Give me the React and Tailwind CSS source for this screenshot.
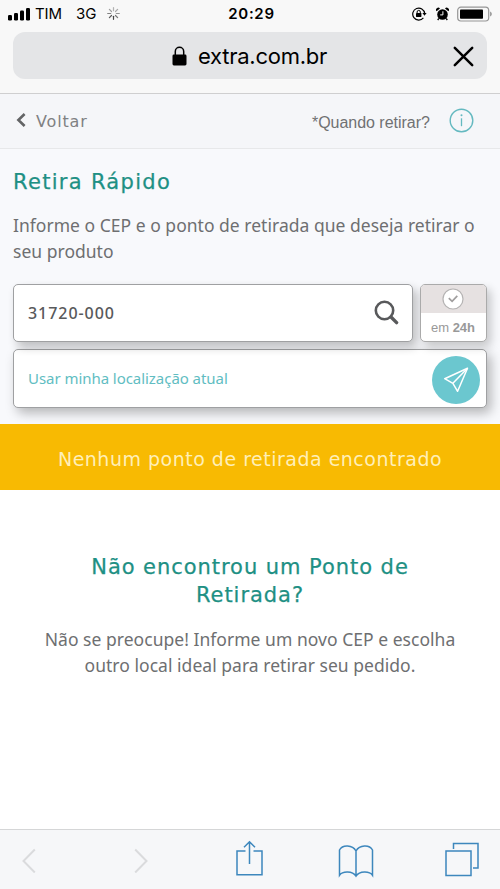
import { useState } from 'react';

function StatusBar() {
  return (
    <div className="h-7 grid grid-cols-3 items-center text-black font-['Inter',sans-serif]">
      <div className="flex items-center pl-2 text-[15px]">
        <svg width="23" height="14" viewBox="0 0 23 14" fill="currentColor">
          <rect x="0" y="8" width="4" height="5.5" rx="1.2" />
          <rect x="6" y="6" width="4" height="7.5" rx="1.2" />
          <rect x="12" y="3.5" width="4" height="10" rx="1.2" />
          <rect x="18" y="1" width="4" height="12.5" rx="1.2" />
        </svg>
        <span className="ml-1 w-[27px] tracking-[-0.1px]">TIM</span>
        <span className="ml-[14px] w-[22px]">3G</span>
        <svg className="ml-[9px] -mt-px" width="13" height="13" viewBox="0 0 13 13" stroke="#333" strokeWidth="1.2" strokeLinecap="round">
          <path d="M6.5 .7v3" opacity=".35" />
          <path d="M10.6 2.4 8.5 4.5" opacity=".4" />
          <path d="M12.3 6.5h-3" opacity=".5" />
          <path d="M10.6 10.6 8.5 8.5" opacity=".65" />
          <path d="M6.5 12.3v-3" opacity=".9" />
          <path d="M2.4 10.6 4.5 8.5" opacity=".8" />
          <path d="M.7 6.5h3" opacity=".6" />
          <path d="M2.4 2.4 4.5 4.5" opacity=".45" />
        </svg>
      </div>
      <div className="text-center text-[15px] font-semibold tracking-[0.7px] pl-[3px]">20:29</div>
      <div className="flex items-center justify-end pr-2">
        {/* rotation lock */}
        <svg width="15" height="14" viewBox="0 0 15 14" fill="none" stroke="#000" strokeWidth="1.2">
          <path d="M11.4 10.9A6 6 0 1 1 12.7 6.4" />
          <path d="M10.4 6h4.2l-2.1 2.8z" fill="#000" stroke="none" />
          <rect x="4" y="6" width="5.4" height="4" rx=".4" fill="#000" stroke="none" />
          <path d="M5.1 6.2V5a1.6 1.6 0 0 1 3.2 0v1.2" strokeWidth="1" />
        </svg>
        {/* alarm */}
        <svg className="ml-[9px]" width="13" height="14" viewBox="0 0 13 14">
          <circle cx="6.5" cy="7.5" r="5.3" />
          <path d="M.6 4.3A2.2 2.2 0 0 1 4 1.4zM12.4 4.3A2.2 2.2 0 0 0 9 1.4z" />
          <path d="M2.8 11.5 1.7 13M10.2 11.5l1.1 1.5" stroke="#000" strokeWidth="1.3" />
          <path d="M6.9 4.3v3.6H4.2" fill="none" stroke="#f8f8f8" strokeWidth="1" />
        </svg>
        <svg className="ml-[8px] -mr-px -mt-px" width="36" height="16" viewBox="0 0 36 16">
          <rect x=".7" y="1.2" width="31" height="13.8" rx="3.2" fill="none" stroke="#969696" strokeWidth="1.2" />
          <rect x="3" y="3.5" width="23" height="9.2" rx=".8" />
          <path d="M33.2 5.6c2 .8 2 4.2 0 5z" fill="#8b8b8b" />
        </svg>
      </div>
    </div>
  );
}

function AddressBar() {
  return (
    <div className="mx-[13px] mt-1 h-[47px] rounded-[12px] bg-[#e4e5e7] flex items-center text-black">
      <svg className="ml-[159px] shrink-0" width="15" height="20" viewBox="0 0 15 20">
        <rect x=".5" y="8.5" width="14" height="11" rx="1.4" />
        <path d="M3.3 9V5.4a4.2 4.2 0 0 1 8.4 0V9" fill="none" stroke="#000" strokeWidth="1.5" />
      </svg>
      <span className="ml-[11px] flex-1 font-['Inter',sans-serif] text-[22px] leading-[30px] tracking-[-0.25px]">extra.com.br</span>
      <svg className="mr-[13px] mt-px" width="21" height="21" viewBox="0 0 21 21" stroke="#000" strokeWidth="2.5" strokeLinecap="round">
        <path d="M1.8 1.8l17.4 17.4M19.2 1.8L1.8 19.2" />
      </svg>
    </div>
  );
}

function PageNav() {
  return (
    <nav className="h-[55px] bg-[#f5f6f9] border-b border-[#e7e8ea] flex items-center text-[#808183]">
      <svg className="ml-[16px] -mt-[3px]" width="10" height="14" viewBox="0 0 10 14" fill="none" stroke="#636466" strokeWidth="2.6">
        <path d="M8.6 1 2.4 7l6.2 6" />
      </svg>
      <span className="ml-[10px] mt-px font-['DejaVu_Sans',sans-serif] text-[16px] leading-6 tracking-[0.85px]">Voltar</span>
      <span className="ml-auto mt-[3px] w-[118px] whitespace-nowrap font-['Liberation_Sans',sans-serif] text-[16px] leading-5 tracking-[-0.03px] text-[#707173]">
        *Quando retirar?
      </span>
      <svg className="ml-[19px] mr-[26px] -mt-[2px]" width="25" height="25" viewBox="0 0 25 25" fill="none" stroke="#64b9c0" strokeWidth="1.4">
        <circle cx="12.5" cy="12.5" r="11.3" />
        <path d="M12.5 10.3v7.9" strokeWidth="1.3" />
        <circle cx="12.5" cy="7.2" r="1" fill="#64b9c0" stroke="none" />
      </svg>
    </nav>
  );
}

function SearchForm() {
  const [cep, setCep] = useState('31720-000');

  return (
    <section className="h-[275px] bg-[#f8f9fc] px-[13px] pt-[19px] overflow-hidden">
      <h1 className="font-['DejaVu_Sans',sans-serif] text-[21px] leading-7 tracking-[1.3px] text-[#1e9084] [-webkit-text-stroke:0.25px_#1e9084]">Retira Rápido</h1>
      <p className="mt-[16px] whitespace-nowrap font-['Noto_Sans',sans-serif] text-[17.5px] leading-[26px] tracking-[0.02px] text-[#6e6f71]">
        Informe o CEP e o ponto de retirada que deseja retirar o<br />seu produto
      </p>

      <div className="mt-[20px] flex gap-[7px]">
        <div className="w-[400px] h-[58px] bg-white rounded-[5px] border border-[#9fa0a2] shadow-[4px_5px_10px_rgba(0,0,0,0.24)] flex items-center">
          <input
            type="text"
            value={cep}
            onChange={e => setCep(e.target.value)}
            aria-label="CEP"
            className="ml-[14px] -mt-px flex-1 min-w-0 bg-transparent outline-none font-['Noto_Sans',sans-serif] font-medium text-[16px] tracking-[0.95px] text-[#58595b]"
          />
          <svg className="mr-[13px] -mt-px" width="25" height="25" viewBox="0 0 25 25" fill="none" stroke="#58595b" strokeLinecap="round">
            <circle cx="10.5" cy="10.5" r="8.7" strokeWidth="2.6" />
            <path d="M17 17l5.6 5.6" strokeWidth="3.4" />
          </svg>
        </div>
        <div className="w-[67px] h-[58px] bg-white rounded-[5px] border border-[#aaa] shadow-[4px_5px_10px_rgba(0,0,0,0.2)] overflow-hidden">
          <div className="h-[28px] bg-[#e6e1e1] flex items-center justify-center">
            <svg className="-ml-px" width="22" height="22" viewBox="0 0 22 22" fill="none">
              <circle cx="11" cy="11" r="10" fill="#fff" stroke="#b5b3b3" strokeWidth="1.2" />
              <path d="M6.8 10.2l3.3 3.2 5.2-5.5" stroke="#a09e9e" strokeWidth="1.7" />
            </svg>
          </div>
          <div className="h-[28px] pt-px pr-px flex items-center justify-center font-['Liberation_Sans',sans-serif] text-[13px] text-[#999]">
            <span className="whitespace-nowrap">em <b>24h</b></span>
          </div>
        </div>
      </div>

      <button className="mt-[7px] w-full h-[59px] bg-white rounded-[5px] border border-[#9fa0a2] shadow-[4px_5px_12px_rgba(0,0,0,0.28)] flex items-center justify-between">
        <span className="ml-[14px] -mt-px font-['Noto_Sans',sans-serif] text-[15px] tracking-[-0.05px] text-[#61bdc2]">Usar minha localização atual</span>
        <span className="mr-[6px] mt-[2px] size-12 rounded-full bg-[#6bc7cf] flex items-center justify-center">
          <svg width="26" height="26" viewBox="0 0 26 26" fill="none" stroke="#fff" strokeWidth="1.5" strokeLinejoin="round">
            <path d="M24.5 1.2 1.7 11.7l8.2 4.6 4.7 8z" />
            <path d="M24.5 1.2 9.9 16.3" />
          </svg>
        </span>
      </button>
    </section>
  );
}

function Toolbar() {
  return (
    <footer className="mt-auto h-[60px] border-t border-[#d5d6d7] bg-[#f6f7f9] flex items-center text-[#3d87bd]">
      <svg className="ml-[22px] mt-[2px]" width="14" height="25" viewBox="0 0 14 25" fill="none" stroke="#dadbdd" strokeWidth="2">
        <path d="M12.8 1.5 1.5 13l11.3 11.5" />
      </svg>
      <svg className="ml-[98px] mt-[2px]" width="14" height="25" viewBox="0 0 14 25" fill="none" stroke="#dadbdd" strokeWidth="2">
        <path d="M1.2 1.5 12.5 13 1.2 24.5" />
      </svg>
      <svg className="ml-[87px] -mt-[6px]" width="28" height="38" viewBox="0 0 28 38" fill="none" stroke="currentColor" strokeWidth="1.5">
        <path d="M10.5 13H2v23.7h25V13h-8.5M14.5 26V4M9 9.3l5.5-5.5L20 9.3" />
      </svg>
      <svg className="ml-[75px] mt-[2px]" width="36" height="34" viewBox="0 0 36 34" fill="none" stroke="currentColor" strokeWidth="1.5">
        <path d="M18 7C14.5.8 4.500.5 1.500 6v25.300C4.500 27 14.500 26.800 18 32.200 21.500 26.800 31.500 27 34.500 31.300V6C31.500.5 21.500.8 18 7zM18 7v25" />
      </svg>
      <svg className="ml-[70px] -mt-px" width="36" height="36" viewBox="0 0 36 36" fill="none" stroke="currentColor" strokeWidth="1.5">
        <rect x="2" y="10" width="25" height="24.5" />
        <path d="M9.5 8V2.500h24.500V27h-5" />
      </svg>
    </footer>
  );
}

export default function App() {
  return (
    <main className="w-[500px] h-[889px] bg-white flex flex-col overflow-hidden">
      <header className="h-[94px] shrink-0 bg-[#f8f8f8] border-b border-[#cfcfd0]">
        <StatusBar />
        <AddressBar />
      </header>
      <PageNav />
      <SearchForm />
      <div className="h-[66px] bg-[#f8ba02] flex items-center justify-center pt-[4px]">
        <p className="whitespace-nowrap font-['DejaVu_Sans',sans-serif] text-[19px] leading-7 tracking-[0.5px] text-[#ffefb8]">
          Nenhum ponto de retirada encontrado
        </p>
      </div>
      <section className="pt-[63px] text-center">
        <h2 className="font-['DejaVu_Sans',sans-serif] text-[21px] leading-7 tracking-[0.95px] text-[#1e9084] [-webkit-text-stroke:0.25px_#1e9084]">
          Não encontrou um Ponto de<br />Retirada?
        </h2>
        <p className="mt-[17px] whitespace-nowrap font-['Noto_Sans',sans-serif] text-[17.5px] leading-[26px] tracking-[0.03px] text-[#6e6f71]">
          Não se preocupe! Informe um novo CEP e escolha<br />outro local ideal para retirar seu pedido.
        </p>
      </section>
      <Toolbar />
    </main>
  );
}
